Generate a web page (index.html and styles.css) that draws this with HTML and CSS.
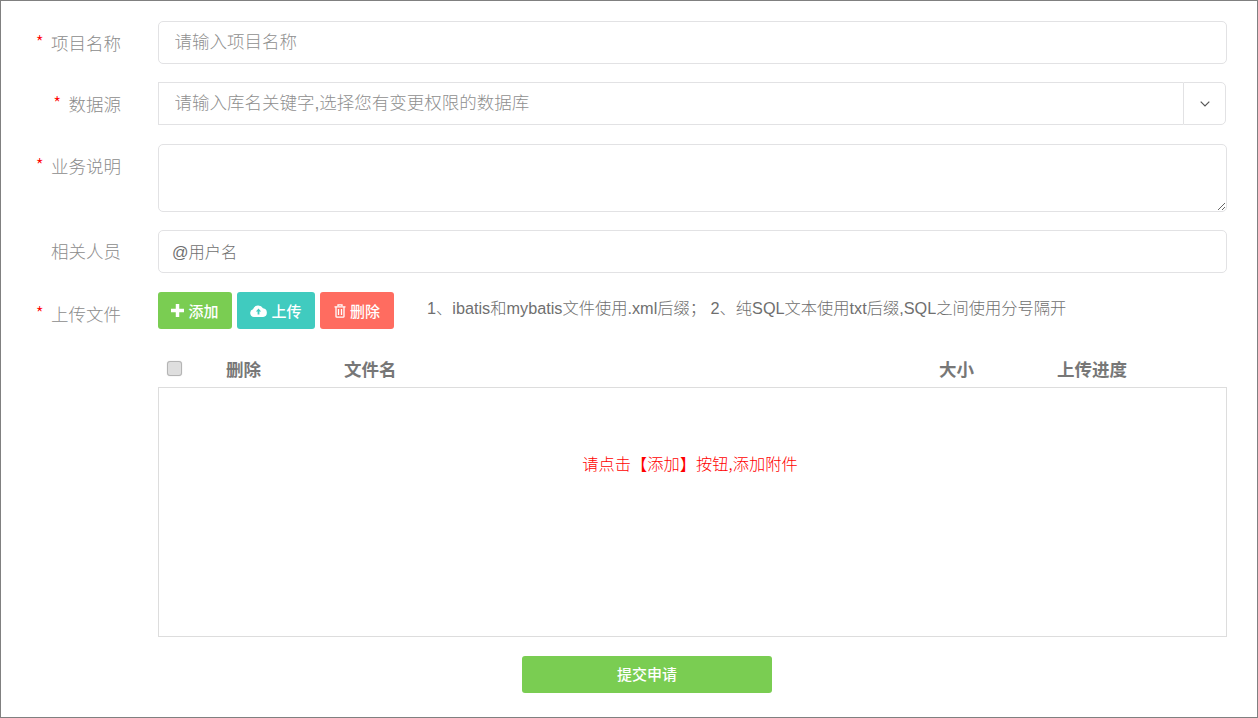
FILE: index.html
```html
<!DOCTYPE html>
<html lang="zh-CN">
<head>
<meta charset="utf-8">
<title>提交申请</title>
<link rel="stylesheet" href="styles.css">
</head>
<body>
<main class="frame">
  <form class="form">
    <div class="row row-1">
      <label class="label"><span class="req">*</span>项目名称</label>
      <input class="field" type="text" placeholder="请输入项目名称">
    </div>
    <div class="row row-2">
      <label class="label"><span class="req">*</span>数据源</label>
      <div class="group">
        <input class="field field-group" type="text" placeholder="请输入库名关键字,选择您有变更权限的数据库">
        <span class="addon">
          <svg width="10" height="6" viewBox="0 0 10 6"><path d="M.7.7 5 5 9.3.7" fill="none" stroke="#555" stroke-width="1.2"/></svg>
        </span>
      </div>
    </div>
    <div class="row row-3">
      <label class="label label-top"><span class="req">*</span>业务说明</label>
      <textarea class="area"></textarea>
    </div>
    <div class="row row-4">
      <label class="label">相关人员</label>
      <input class="field field-user" type="text" value="@用户名">
    </div>
    <div class="row row-5">
      <label class="label label-up"><span class="req">*</span>上传文件</label>
      <div class="tools">
        <button type="button" class="btn btn-green">
          <svg width="13" height="13" viewBox="0 0 12 12"><path d="M4.4 0h3.2v4.4H12v3.2H7.6V12H4.4V7.6H0V4.4h4.4z" fill="#fff"/></svg>添加
        </button>
        <button type="button" class="btn btn-teal">
          <svg width="17" height="12" viewBox="0 0 17 12"><path d="M4 12a4 4 0 0 1-1-7.8A5.5 5.5 0 0 1 13 3.3 4.4 4.4 0 0 1 13.2 12z" fill="#fff"/><path d="M8.5 3.6 5.9 6.4h1.7v3h1.8v-3h1.7z" fill="#40cbbf"/></svg>上传
        </button>
        <button type="button" class="btn btn-red">
          <svg width="12" height="14" viewBox="0 0 12 14"><path d="M4 2V.8h4V2M.5 2.8h11M2 2.8v9.6c0 .4.3.8.8.8h6.4c.5 0 .8-.4.8-.8V2.8M4.5 5v6M7.5 5v6" fill="none" stroke="#fff" stroke-width="1.3"/></svg>删除
        </button>
        <p class="hint">1、ibatis和mybatis文件使用.xml后缀；&nbsp;2、纯SQL文本使用txt后缀,SQL之间使用分号隔开</p>
      </div>
    </div>
    <div class="row row-6">
      <span></span>
      <div class="table">
        <div class="thead">
          <span class="c-check"><input class="check" type="checkbox"></span>
          <span class="c-del">删除</span>
          <span class="c-name">文件名</span>
          <span class="c-size">大小</span>
          <span class="c-prog">上传进度</span>
        </div>
        <div class="tbody">请点击【添加】按钮,添加附件</div>
      </div>
    </div>
    <div class="submit-row">
      <button type="button" class="submit">提交申请</button>
    </div>
  </form>
</main>
</body>
</html>
```
FILE: styles.css
```css
* { box-sizing: border-box; }
html, body { margin: 0; padding: 0; background: #fff; }
body { font-family: "Liberation Sans", "Noto Sans CJK SC", sans-serif; }
.frame { width: 1258px; height: 718px; border: 1px solid #808080; overflow: hidden; }
.form { padding: 20px 30px 0 0; }
.row { display: grid; grid-template-columns: 120px 1069px; column-gap: 37px; }
.row-1, .row-2 { height: 43px; margin-bottom: 18px; }
.row-2 { margin-bottom: 19px; }
.row-3 { height: 68px; margin-bottom: 18px; }
.row-4 { height: 43px; margin-bottom: 19px; }
.row-5 { height: 37px; margin-bottom: 21px; }
.label { font-size: 17.5px; color: #8c8c8c; text-align: right; line-height: 42px; font-family: "Noto Sans CJK SC", sans-serif; font-weight: 300; }
.label-top { line-height: 42px; }
.label-up { line-height: 41px; }
.req { color: #f00; margin-right: 7px; font-size: 19px; font-family: "Noto Sans CJK SC", sans-serif; font-weight: 300; }
.field { width: 100%; height: 43px; border: 1px solid #e2e2e4; border-radius: 5px; padding: 0 15.5px; font-size: 17.5px; font-family: "Liberation Sans", "Noto Sans CJK SC", sans-serif; font-weight: 300; color: #777; outline: none; background: #fff; }
.field::placeholder { color: #8f8f8f; opacity: 1; }
.field-user { font-size: 16.25px; padding: 0 13px 1px; color: #6f6f6f; }
.group { display: flex; height: 43px; width: 1068px; }
.field-group { flex: 1; border-radius: 0; border-right: 0; min-width: 0; }
.addon { width: 43px; display: flex; align-items: center; justify-content: center; border: 1px solid #e2e2e4; border-radius: 0 5px 5px 0; }
.area { display: block; width: 100%; height: 68px; border: 1px solid #e2e2e4; border-radius: 5px; resize: both; outline: none; background: #fff; }
.tools { display: flex; align-items: flex-start; }
.btn { display: flex; align-items: center; justify-content: center; gap: 4px; height: 37px; border: 0; border-radius: 3px; color: #fff; font-size: 15px; font-family: "Noto Sans CJK SC", sans-serif; font-weight: 500; padding: 0; margin-right: 5px; }
.btn-green { width: 74px; background: #7acd52; }
.btn-teal { width: 78px; background: #40cbbf; }
.btn-red { width: 74px; background: #ff6c60; }
.hint { margin: 0 0 0 28px; font-size: 16.25px; line-height: 33px; color: #6f6f6f; white-space: nowrap; font-weight: 300; font-family: "Liberation Sans", "Noto Sans CJK SC", sans-serif; }
.thead { display: grid; grid-template-columns: 68px 118px 595px 118px 1fr; height: 37px; align-items: center; font-size: 17.5px; font-weight: 700; color: #777; line-height: 35px; font-family: "Noto Sans CJK SC", sans-serif; }
.c-check { display: flex; padding-left: 9px; }
.check { appearance: none; width: 15px; height: 15px; margin: 0; border: 1px solid #b4b4b4; border-radius: 3px; background: #dedede; box-shadow: 0 0 1px #bbb; }
.tbody { height: 250px; border: 1px solid #ddd; padding-top: 64px; text-align: center; color: #f00; font-size: 16.25px; line-height: 22px; font-weight: 300; font-family: "Noto Sans CJK SC", sans-serif; padding-right: 5px; }
.submit-row { display: flex; padding-left: 521px; margin-top: 19px; }
.submit { width: 250px; height: 37px; border: 0; border-radius: 3px; background: #7acd52; color: #fff; font-size: 15px; font-weight: 500; padding: 0 0 2px; font-family: "Noto Sans CJK SC", sans-serif; }
```
